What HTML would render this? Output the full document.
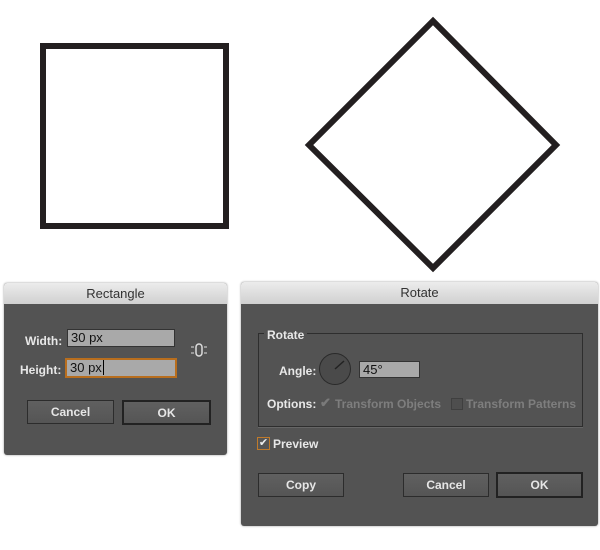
<!DOCTYPE html><html><head><style>
body{margin:0;width:600px;height:550px;background:#fff;position:relative;font-family:"Liberation Sans",sans-serif;overflow:hidden}
.a{position:absolute}
.dlg{position:absolute;background:#535353;border-radius:3px;box-shadow:0 0 2px #999}
.tb{position:absolute;left:0;right:0;top:0;height:21px;background:linear-gradient(#ececec,#d0d0d0);color:#333;font-size:13px;text-align:center;line-height:22px;border-radius:3px 3px 0 0}
.lbl{position:absolute;color:#e8e8e8;font-size:12px;font-weight:bold}
.fld{position:absolute;background:#a9a9a9;border:1px solid #333;color:#111;font-size:13px;box-sizing:border-box;padding-left:3px;line-height:15px}
.btn{position:absolute;background:linear-gradient(#606060,#555);border:1px solid #2c2c2c;box-sizing:border-box;color:#e6e6e6;font-size:12px;font-weight:bold;text-align:center;line-height:22px}
</style></head><body>
<svg class="a" style="left:0;top:0" width="600" height="280">
<rect x="43" y="46" width="183" height="180" fill="none" stroke="#231f20" stroke-width="6"/>
<polygon points="433,21 556,145 433,268 309,145" fill="none" stroke="#231f20" stroke-width="6"/>
</svg>
<div class="dlg" style="left:4px;top:283px;width:223px;height:172px">
<div class="tb">Rectangle</div>
<div class="lbl" style="left:21px;top:51px">Width:</div>
<div class="fld" style="left:63px;top:46px;width:108px;height:18px">30 px</div>
<div class="lbl" style="left:16px;top:80px">Height:</div>
<div class="fld" style="left:61px;top:75px;width:112px;height:20px;border:2px solid #b86e1e;line-height:15px">30 px<span style="border-left:1px solid #000;margin-left:1px"></span></div>
<svg class="a" style="left:186px;top:59px" width="18" height="16"><rect x="6" y="2" width="6" height="12" rx="3" fill="none" stroke="#ddd" stroke-width="1.5"/><g stroke="#ddd" stroke-width="1"><line x1="1" y1="5" x2="4" y2="5"/><line x1="1" y1="11" x2="4" y2="11"/><line x1="14" y1="5" x2="17" y2="5"/><line x1="14" y1="11" x2="17" y2="11"/></g></svg>
<div class="btn" style="left:23px;top:117px;width:87px;height:24px">Cancel</div>
<div class="btn" style="left:118px;top:117px;width:89px;height:25px;border:2px solid #222">OK</div>
</div>
<div class="dlg" style="left:241px;top:282px;width:357px;height:244px">
<div class="tb" style="height:22px">Rotate</div>
<div class="a" style="left:17px;top:51px;width:323px;height:92px;border:1px solid #2e2e2e;box-shadow:0 1px 0 #666"></div>
<div class="lbl" style="left:23px;top:46px;background:#535353;padding:0 3px">Rotate</div>
<div class="lbl" style="left:38px;top:82px">Angle:</div>
<div class="a" style="left:78px;top:71px;width:30px;height:30px;border-radius:50%;background:#4a4a4a;border:1px solid #2a2a2a"></div>
<svg class="a" style="left:78px;top:71px" width="32" height="32"><line x1="16" y1="16" x2="25" y2="8" stroke="#222" stroke-width="1.5"/></svg>
<div class="fld" style="left:118px;top:79px;width:61px;height:17px">45°</div>
<div class="lbl" style="left:26px;top:115px">Options:</div>
<div class="lbl" style="left:79px;top:113px;color:#7a7a7a;font-size:13px">✔</div>
<div class="lbl" style="left:94px;top:115px;color:#7e7e7e;font-weight:bold">Transform Objects</div>
<div class="a" style="left:210px;top:116px;width:10px;height:10px;border:1px solid #3f3f3f;background:#4e4e4e"></div>
<div class="lbl" style="left:225px;top:115px;color:#7e7e7e">Transform Patterns</div>
<div class="a" style="left:16px;top:155px;width:11px;height:11px;border:1px solid #c07a2a;background:#555;color:#eee;font-size:11px;line-height:11px;text-align:center">✔</div>
<div class="lbl" style="left:32px;top:155px">Preview</div>
<div class="btn" style="left:17px;top:191px;width:86px;height:24px">Copy</div>
<div class="btn" style="left:162px;top:191px;width:86px;height:24px">Cancel</div>
<div class="btn" style="left:255px;top:190px;width:87px;height:26px;border:2px solid #222">OK</div>
</div>
</body></html>
